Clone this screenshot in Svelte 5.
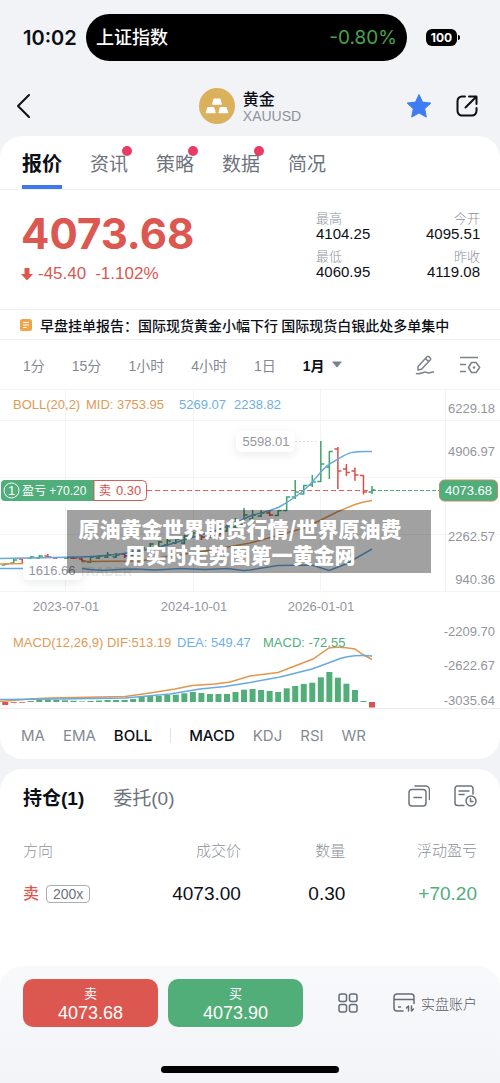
<script>
  const tabs = [
    { name: '报价', active: true },
    { name: '资讯', dot: true },
    { name: '策略', dot: true },
    { name: '数据', dot: true },
    { name: '简况' }
  ];
  const stats = [
    ['最高', '4104.25'],
    ['今开', '4095.51'],
    ['最低', '4060.95'],
    ['昨收', '4119.08']
  ];
  const frames = ['1分', '15分', '1小时', '4小时', '1日'];
  const mainInd = ['MA', 'EMA', 'BOLL'];
  const subInd = ['MACD', 'KDJ', 'RSI', 'WR'];

  const step = 8.53;
  const lastX = 372;

  // Newest first: high, low, open, close, rising
  const bars = [
    [486, 494, 492, 490, 1], [475, 494.5, 475.5, 492, 0], [467.5, 480.7, 471, 475, 0],
    [464, 476, 469, 472.5, 0], [447, 489, 449, 471, 0], [451, 479, 467, 451.5, 1],
    [441, 482, 481.5, 464, 1], [475, 487, 485, 482, 1], [485, 494.5, 494, 485.5, 1],
    [480, 499, 497, 492, 1], [496.5, 511, 510.5, 497, 1], [510, 516, 515.5, 510.5, 1],
    [510, 516, 513, 515, 0], [510, 517, 516, 513, 1], [510, 520, 519, 515, 1],
    [508, 525, 524, 515, 1], [518, 528, 527, 523, 1], [525, 532, 531, 526, 1],
    [528, 536, 532, 534, 0], [530, 538, 537, 532, 1], [532, 540, 534, 537, 0],
    [532, 538, 536, 533, 1], [535, 544, 543, 536, 1], [538, 544, 543, 539, 1],
    [539, 546, 545, 541, 1], [541, 547, 546, 542, 1], [543, 550, 549, 544, 1],
    [546, 553, 552, 548, 1], [550, 556, 555, 551, 1], [553, 558, 554, 556, 0],
    [553, 558, 557, 555, 1], [552, 558, 557, 555, 1], [555, 559, 558, 556, 1],
    [556, 563, 562, 557, 1], [558, 562, 559, 561, 0], [557, 560, 558, 559, 0],
    [558, 561, 560, 559, 1], [557, 561, 558, 560, 0], [554, 558, 556, 557, 0],
    [555, 560, 559, 556, 1], [556, 560, 559, 557, 1], [559, 564, 559, 563, 0],
    [559, 564, 563, 560, 1], [563, 565, 565, 564, 1]
  ];

  // Newest first, positive rises above the zero line
  const hist = [
    -5.5, 1, 12, 18.3, 24.3, 30, 24.7, 19.3, 18, 16, 13.7, 10, 11, 12, 13, 12.3, 10, 8, 8, 8,
    9, 10, 8.7, 7.3, 7, 6, 6, 5, 3, 2, 2, 2, 1.5, 1, 0.5, 1.3, 1.7, 2, 2.3, 2.3, 1, -0.7, -0.8, -3, -5
  ];

  const barX = (i) => lastX - i * step;
  const rows = [
    [413, '6229.18'], [456, '4906.97'], [541, '2262.57'], [584, '940.36'],
    [636, '-2209.70'], [670, '-2622.67'], [705, '-3035.64']
  ];
  const dates = [[66, '2023-07-01'], [194, '2024-10-01'], [321, '2026-01-01']];
</script>

<div class="page">
  <div class="status">
    <span class="clock">10:02</span>
    <div class="island"><span>上证指数</span><span class="fall">-0.80%</span></div>
    <div class="battery"><span>100</span><i></i></div>
  </div>

  <header>
    <button aria-label="返回">
      <svg width="16" height="26" viewBox="0 0 16 26"><path d="M13 2 2 13l11 11" fill="none" stroke="#0c0f16" stroke-width="2" stroke-linecap="round" stroke-linejoin="round" /></svg>
    </button>
    <div class="symbol">
      <svg width="36" height="36" viewBox="0 0 36 36">
        <circle cx="18" cy="18" r="18" fill="#dcb15c" />
        <path d="M15.2 10.5h5.6q.5 0 .7.5l1.4 5q.1.7-.6.7h-8.6q-.7 0-.6-.7l1.4-5q.2-.5.7-.5zM9 19h5.500q.5 0 .7.500l1.500 5q.1.7-.6.7H7.300q-.7 0-.6-.7l1.600-5q.2-.5.7-.5zM21.500 19H27q.5 0 .7.500l1.600 5q.1.7-.6.7H20q-.7 0-.6-.7l1.400-5q.2-.5.7-.5z" fill="#fff" />
      </svg>
      <div class="names"><h1>黄金</h1><span>XAUUSD</span></div>
    </div>
    <div class="actions">
      <button aria-label="收藏">
        <svg width="26" height="26" viewBox="0 0 26 26"><path d="m13 1.500 3.500 7.600 8.300 1-6.100 5.700 1.600 8.300L13 20l-7.300 4.100 1.600-8.300-6.100-5.700 8.300-1z" fill="#3d7cf4" stroke="#3d7cf4" stroke-linejoin="round" /></svg>
      </button>
      <button aria-label="分享">
        <svg width="22" height="22" viewBox="0 0 22 22" fill="none" stroke="#0c0f16" stroke-width="2" stroke-linecap="round" stroke-linejoin="round"><path d="M9 1.500H6A4.500 4.500 0 0 0 1.500 6v10A4.500 4.500 0 0 0 6 20.500h10a4.500 4.500 0 0 0 4.500-4.500v-3M13 1.500h7.500V9M20 2 9.500 12.500" /></svg>
      </button>
    </div>
  </header>

  <main class="card">
    <nav class="tabs">
      {#each tabs as t}
        <button class:active={t.active}>{t.name}{#if t.dot}<i></i>{/if}</button>
      {/each}
    </nav>

    <section class="quote">
      <div>
        <div class="price">4073.68</div>
        <div class="change">
          <svg width="12" height="14" viewBox="0 0 12 14"><path d="M3.500 1h5v6H12l-6 6.500L0 7h3.500z" fill="#dc5750" /></svg>
          <span>-45.40</span><span class="pct">-1.102%</span>
        </div>
      </div>
      <dl>
        {#each stats as [k, v]}
          <div><dt>{k}</dt><dd>{v}</dd></div>
        {/each}
      </dl>
    </section>

    <a class="news" href="#news">
      <svg width="12" height="12" viewBox="0 0 12 12"><rect width="12" height="12" rx="2.500" fill="#f0a347" /><path d="M3 3.500h6M3 6h6M3 8.500h3.500" stroke="#fff" /></svg>
      <span>早盘挂单报告：国际现货黄金小幅下行 国际现货白银此处多单集中</span>
    </a>

    <div class="frames">
      {#each frames as f}<button>{f}</button>{/each}
      <button class="active">1月 <svg width="10" height="7" viewBox="0 0 10 7"><path d="M1 .5h8q.8 0 .4.700L5.600 6q-.6.700-1.200 0L.6 1.200Q.2.500 1 .500z" fill="#7b828c" /></svg></button>
      <div class="tools">
        <button aria-label="画线">
          <svg width="20" height="20" viewBox="0 0 20 20" fill="none" stroke="#7b828c" stroke-width="1.500" stroke-linejoin="round" stroke-linecap="round"><path d="M3 15V11.500L12 1.800q1-1 2 0l1.200 1.200q1 1 0 2L6.500 14.200zM11 4l2.500 2.500M1.500 18.500c3 .8 5-.2 7.500-1.200s2.500.8 4.500.6 3-1 5-.9" /></svg>
        </button>
        <button aria-label="指标设置">
          <svg width="22" height="20" viewBox="0 0 22 20" fill="none" stroke="#7b828c" stroke-width="1.500"><path d="M1 2.500h18M1 9.500h6M1 16.500h6M12.500 7.500h4.600l3.600 5-3.600 5h-4.600l-3-5z" stroke-linejoin="round" /><circle cx="15" cy="12.500" r="1.300" fill="#7b828c" stroke="none" /></svg>
        </button>
      </div>
    </div>

    <div class="chart">
      <svg viewBox="0 389 500 320" role="img" aria-label="XAUUSD K线图">
        <path d="M0 389.500h500M0 420.500h500M0 477.500h500M0 534.500h500M0 591.500h500M65.500 390v201M193.500 390v201M320.500 390v201M445.500 390v201" stroke="#f3f4f8" fill="none" />
        <path d="M0 708.500h500" stroke="#ebecef" />
        <text x="78" y="576" class="brand">TRADER</text>

        <g class="orange"><text x="13" y="409">BOLL(20,2)</text><text x="86" y="409">MID: 3753.95</text></g>
        <g class="sky"><text x="179" y="409">5269.07</text><text x="234" y="409">2238.82</text></g>
        {#each rows as [y, t]}<text x="495" {y} class="grey end">{t}</text>{/each}
        {#each dates as [x, t]}<text {x} y="611" class="grey mid">{t}</text>{/each}

        <path d="M147 490.500h225" stroke="#d9645f" stroke-dasharray="5 3" />
        <path d="M372 490.500h67" stroke="#4fae7a" stroke-dasharray="4 2" />
        <path d="M0 568.500h26" stroke="#5aa2de" stroke-dasharray="2 2" />
        <path d="M295 441.500h24" stroke="#dfe1e5" stroke-dasharray="2 2" />

        {#each bars as [hi, lo, op, cl, up], i}
          <path d="M{barX(i)} {hi}V{lo}M{barX(i) - 3.500} {op}h3.500M{barX(i)} {cl}h3.500" stroke={up ? '#3fa56b' : '#d8504b'} stroke-width="1.500" />
        {/each}
        <path class="line blue" d="M0 558.500C30 558 50 557.500 80 557S130 553 150 549S178 542 190 538S225 530 250 516C262 512 272 511 280 506.500S297 496 304 490S314 480 320 473S328 465 338 459S350 451 372 451.500" />
        <path class="line amber" d="M0 564 50 563 85 561.500 140 561 170 556 200 552 250 543 283 534 304 528 321 520 338 511.500 355 504.500Q364 501.500 372 500.500" />
        <path class="line blue" d="M0 568.500H82Q96 571 110 570T135 569L155 570 180 568.500 205 569.500 228 568.500 243 570.500 250 570 278 565.500 312 565 329 570.500 346 564 372 549" />

        <g class="bubble"><rect x="236" y="431" width="59" height="21" rx="5" /><rect x="23" y="559" width="59" height="21" rx="5" /></g>
        <text x="266" y="446" class="grey mid">5598.01</text>
        <text x="52" y="575" class="grey mid">1616.66</text>

        <rect x="1.500" y="480.500" width="145" height="20" rx="4" fill="#fff" stroke="#d45e59" />
        <path d="M94 480V501H5a4 4 0 0 1-4-4V484a4 4 0 0 1 4-4z" fill="#4fae7a" />
        <path d="M94 480v21" stroke="#d45e59" />
        <circle cx="11.500" cy="490.500" r="7.500" fill="none" stroke="#fff" />
        <g fill="#fff"><text x="11.500" y="495" class="mid">1</text><text x="22" y="495" class="small">盈亏 +70.20</text></g>
        <text x="99" y="495" class="small" fill="#d8504b">卖</text><text x="116" y="495" fill="#d8504b">0.30</text>

        <rect x="439.500" y="480" width="58" height="21" rx="5" fill="#4fae7a" stroke="#b98f63" />
        <text x="468.500" y="495" fill="#fff" class="mid">4073.68</text>

        {#each hist as h, i}
          <rect x={barX(i) - 3} y={h > 0 ? 702 - h : 702} width="6" height={Math.abs(h)} fill={h > 0 ? '#52ae78' : '#d8554f'} />
        {/each}
        <path class="line amber" d="M0 701.500 30 699 50 698 125 696.500 150 693 175 689 192 685.500 215 684 230 682 250 676 278 672.500 300 664 313 659 329 648Q340 646 355 649L362 654 372 659.500" />
        <path class="line blue" d="M0 699.500 60 699 125 698 170 694 200 689 225 686.500 250 682.500 280 677 312 669 335 660.500Q350 654 372 656" />
        <text x="13" y="647" class="orange">MACD(12,26,9) DIF:513.19</text>
        <text x="177" y="647" class="sky">DEA: 549.47</text>
        <text x="263" y="647" fill="#4fae7a">MACD: -72.55</text>
      </svg>
      <div class="caption"><p>原油黄金世界期货行情/世界原油费<br />用实时走势图第一黄金网</p></div>
    </div>

    <div class="indicators">
      {#each mainInd as n}<button class:active={n === 'BOLL'}>{n}</button>{/each}
      <span class="sep"></span>
      {#each subInd as n}<button class:active={n === 'MACD'}>{n}</button>{/each}
    </div>
  </main>

  <section class="card positions">
    <div class="phead">
      <button class="active">持仓(1)</button>
      <button>委托(0)</button>
      <div class="tools">
        <button aria-label="一键平仓">
          <svg width="22" height="22" viewBox="0 0 22 22" fill="none" stroke="#6d737c" stroke-width="1.500" stroke-linecap="round"><rect x="1" y="4.500" width="17" height="16.500" rx="3" /><path d="M6 12.500h7.500M7 1h10.500a4 4 0 0 1 4 4v9.500" /></svg>
        </button>
        <button aria-label="历史记录">
          <svg width="23" height="22" viewBox="0 0 23 22" fill="none" stroke="#6d737c" stroke-width="1.500" stroke-linecap="round" stroke-linejoin="round"><path d="M10 20.500H3.500A2.500 2.500 0 0 1 1 18V3.500A2.500 2.500 0 0 1 3.500 1h13A2.500 2.500 0 0 1 19 3.500V9M5 6h10M5 9.500h5" /><circle cx="17" cy="16" r="5" /><path d="M16.500 13.500v3H19" /></svg>
        </button>
      </div>
    </div>
    <table>
      <thead><tr><th>方向</th><th>成交价</th><th>数量</th><th>浮动盈亏</th></tr></thead>
      <tbody><tr><td><div class="side"><b>卖</b><span>200x</span></div></td><td>4073.00</td><td>0.30</td><td class="gain">+70.20</td></tr></tbody>
    </table>
  </section>

  <div class="under">
    <footer>
      <div class="trade">
        <button class="order sell"><span>卖</span>4073.68</button>
        <button class="order buy"><span>买</span>4073.90</button>
        <button class="more" aria-label="更多">
          <svg width="20" height="20" viewBox="0 0 20 20" fill="none" stroke="#666c75" stroke-width="1.500"><rect x="1" y="1" width="7.500" height="7.500" rx="2" /><rect x="11.500" y="1" width="7.500" height="7.500" rx="2" /><rect x="1" y="11.500" width="7.500" height="7.500" rx="2" /><rect x="11.500" y="11.500" width="7.500" height="7.500" rx="2" /></svg>
        </button>
        <button class="account">
          <svg width="22" height="20" viewBox="0 0 22 20" fill="none" stroke="#666c75" stroke-width="1.500" stroke-linecap="round" stroke-linejoin="round"><path d="M10 18H4a3 3 0 0 1-3-3V4a3 3 0 0 1 3-3h14a3 3 0 0 1 3 3v6.500M1 6.500h20M5.500 14h2M15.500 18v-5l-2 2M18.500 13v5l2-2" /></svg>
          实盘账户
        </button>
      </div>
      <div class="home"></div>
    </footer>
  </div>
</div>

<style>
  :global(body) { background: #f2f3f7; }
  .page { font-family: "Liberation Sans", "Noto Sans CJK SC", sans-serif; color: #0c0f16; }
  button { border: 0; padding: 0; margin: 0; background: none; font: inherit; color: inherit; cursor: pointer; white-space: nowrap; }
  svg { display: block; }
  .tools { display: flex; align-items: center; gap: 24px; margin-left: auto; }
  .active { color: #0c0f16; }

  .status { display: flex; align-items: center; padding: 14px 40px 0 23px; font: 500 20px/24px Inter, "Noto Sans CJK SC", sans-serif; }
  .clock { width: 63px; font-weight: 600; white-space: nowrap; }
  .island { flex: 1; display: flex; align-items: center; justify-content: space-between; height: 47px; padding: 0 10px; border-radius: 24px; background: #000; color: #fff; font-size: 18px; }
  .fall { color: #4aa34c; font-size: 19px; font-weight: 400; }
  .battery { display: flex; align-items: center; margin-left: 19px; color: #fff; font: 700 12px/17px Inter, sans-serif; }
  .battery span { width: 31px; border-radius: 6px; background: #000; text-align: center; }
  .battery i { width: 2px; height: 5px; margin-left: 1px; border-radius: 0 2px 2px 0; background: #000; }

  header { display: grid; grid-template-columns: 1fr auto 1fr; align-items: center; height: 75px; padding: 14px 22px 0 16px; box-sizing: border-box; }
  header > button { justify-self: start; }
  .symbol { display: flex; gap: 8px; align-items: center; margin-left: 6px; }
  .names { display: flex; flex-direction: column; }
  h1 { margin: 0; font: 500 16px/20px "Noto Sans CJK SC", sans-serif; }
  .names span { font-size: 14px; line-height: 16px; color: #8d929b; }
  .actions { display: flex; gap: 24px; align-items: center; justify-self: end; }

  .card { display: block; background: #fff; border-radius: 22px; }
  .tabs { display: flex; gap: 28px; padding: 0 22px; height: 53px; border-bottom: 1px solid #eff0f3; color: #6d737c; font-size: 19px; }
  .tabs button { position: relative; height: 53px; box-sizing: border-box; padding-top: 4px; border-bottom: 4px solid transparent; }
  .tabs .active { font-size: 20px; font-weight: 700; border-color: #3f78ea; color: #0c0f16; }
  .tabs i { position: absolute; top: 10px; right: -4px; width: 10px; height: 10px; border-radius: 50%; background: #ea3b63; }

  .quote { display: flex; justify-content: space-between; padding: 19px 20px 22px 21px; }
  .price { font: 700 42px/50px Inter, sans-serif; color: #dc5750; }
  .change { display: flex; align-items: center; gap: 5px; margin-top: 3px; font-size: 17px; line-height: 24px; color: #dc5750; }
  .pct { margin-left: 4px; }
  dl { display: grid; grid-template-columns: 110px 54px; align-content: start; margin: 0; padding-top: 2px; }
  dl > div:nth-child(even) { text-align: right; }
  dt { font-size: 13px; line-height: 16px; color: #8d929b; font-weight: 300; }
  dd { margin: 0 0 8px; font-size: 15px; line-height: 14px; }

  .news { display: flex; align-items: center; gap: 8px; height: 29px; padding: 0 20px; border: solid #eff0f3; border-width: 1px 0; color: inherit; text-decoration: none; font-size: 14px; font-weight: 500; font-family: "Noto Sans CJK SC", sans-serif; white-space: nowrap; }
  .frames { display: flex; align-items: center; gap: 27px; height: 49px; padding: 0 19px 0 23px; font-size: 14px; color: #848a93; }
  .frames .active { display: flex; gap: 7px; align-items: center; font-weight: 700; }

  .chart { position: relative; }
  .chart svg { width: 100%; height: auto; }
  text { font-size: 13px; }
  .grey { fill: #92969d; }
  .end { text-anchor: end; }
  .mid { text-anchor: middle; }
  .orange { fill: #e09a55; }
  .sky { fill: #6fb0e4; }
  .small { font-size: 12px; }
  .brand { font-size: 13px; font-weight: 700; fill: #e9eaed; }
  .line { fill: none; stroke-width: 1.5; }
  .blue { stroke: #68a9df; }
  .amber { stroke: #e2964f; }
  .bubble rect { fill: #fff; filter: drop-shadow(0 3px 5px rgb(60 70 90 / 10%)); }
  .caption { position: absolute; left: 13.4%; top: 37.8%; width: 72.8%; box-sizing: border-box; padding: 5px 18px 6px 0; background: rgb(0 0 0 / 37%); color: #fff; text-align: center; font: 900 21px/26px "Noto Sans CJK SC", sans-serif; }
  .caption p { margin: 0; white-space: nowrap; }

  .indicators { display: flex; align-items: center; gap: 18px; height: 50px; box-sizing: border-box; padding: 3px 21px 0; font: 400 15px/20px Inter, sans-serif; color: #848a93; }
  .indicators .active { font-weight: 500; }
  .sep { width: 1px; height: 15px; background: #dfe1e5; }

  .positions { margin-top: 10px; border-radius: 22px 22px 0 0; padding: 12px 23px 58px; }
  .phead { display: flex; align-items: center; gap: 29px; height: 30px; font-size: 19px; color: #6d737c; }
  .phead .active { font-weight: 700; }
  table { width: 100%; border-collapse: collapse; table-layout: fixed; margin-top: 25px; }
  th { padding: 0; font-size: 15px; line-height: 30px; font-weight: 300; color: #8d929b; text-align: right; }
  td { padding: 14px 0 0; font-size: 19px; line-height: 28px; text-align: right; }
  th:first-child { text-align: left; width: 23%; }
  th:nth-child(2) { width: 25%; }
  th:nth-child(3) { width: 23%; }
  .gain { color: #4fae7a; }
  .side { display: flex; align-items: center; gap: 7px; }
  .side b { font-size: 16px; font-weight: 500; color: #dc5750; }
  .side span { padding: 0 6px; border: 1px solid #a9adb5; border-radius: 4px; font-size: 14px; line-height: 16px; color: #6d737c; }

  .under { background: #fff; }
  footer { border-radius: 22px 22px 0 0; background: linear-gradient(#f8f9fb, #f3f4f8); padding: 13px 23px 10px; }
  .trade { display: flex; align-items: center; }
  .order { flex: 0 1 135px; height: 48px; margin-right: 10px; border-radius: 10px; color: #fff; font-size: 18px; line-height: 20px; }
  .order span { display: block; font-size: 13px; line-height: 19px; }
  .sell { background: #dc5750; }
  .buy { background: #52ae78; }
  .more { margin: 0 auto 0 25px; }
  .account { display: flex; align-items: center; gap: 6px; font-size: 14px; font-weight: 300; color: #555b64; }
  .home { width: 178px; height: 7px; margin: 39px auto 0; border-radius: 4px; background: #000; }
</style>
